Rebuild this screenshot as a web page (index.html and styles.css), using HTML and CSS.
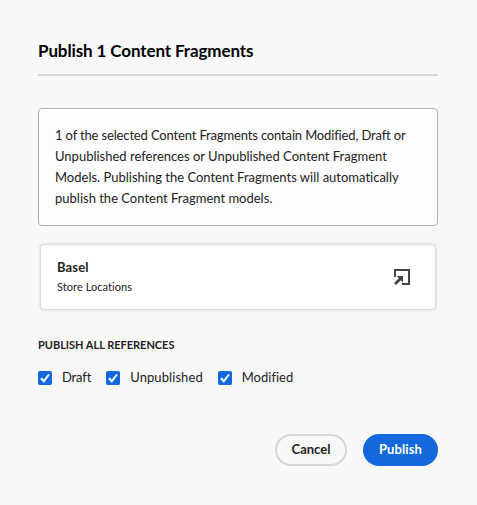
FILE: index.html
```html
<!DOCTYPE html>
<html lang="en">
<head>
<meta charset="utf-8">
<title>Publish</title>
<link rel="stylesheet" href="styles.css">
</head>
<body>
<main class="dialog">
  <h1 class="title">Publish 1 Content Fragments</h1>
  <p class="notice"><span class="tight">1 of the selected Content Fragments contain Modified, Draft or</span><br>Unpublished references or Unpublished Content Fragment<br>Models. Publishing the Content Fragments will automatically<br>publish the Content Fragment models.</p>
  <section class="card">
    <div>
      <h2 class="name">Basel</h2>
      <p class="model">Store Locations</p>
    </div>
    <svg class="open" viewBox="0 0 18 18"><path d="M1 1h16v16H9v-2h6V3H3v6H1z"/><path d="M3.5 8H10v6.500L7.800 12.300 3 17l-2-2 4.800-4.700z"/></svg>
  </section>
  <h3 class="label">PUBLISH ALL REFERENCES</h3>
  <div class="checks">
    <label class="check"><svg class="box" viewBox="0 0 14 14"><rect width="14" height="14" rx="2"/><path d="M3 7.2l2.8 3 5.2-6.7"/></svg><span class="tight">Draft</span></label>
    <label class="check"><svg class="box" viewBox="0 0 14 14"><rect width="14" height="14" rx="2"/><path d="M3 7.2l2.8 3 5.2-6.7"/></svg><span class="wide">Unpublished</span></label>
    <label class="check"><svg class="box" viewBox="0 0 14 14"><rect width="14" height="14" rx="2"/><path d="M3 7.2l2.8 3 5.2-6.7"/></svg><span>Modified</span></label>
  </div>
  <footer class="actions">
    <button class="btn cancel">Cancel</button>
    <button class="btn publish">Publish</button>
  </footer>
</main>
</body>
</html>
```

FILE: styles.css
```css
* { box-sizing: border-box; margin: 0; }
body { background: #f8f8f8; color: #222; font: 13px/21px Lato, "Noto Sans", sans-serif; font-variant-ligatures: none; }
.dialog { width: 477px; height: 505px; padding: 38px 39px 0 38px; }
.title { height: 38px; border-bottom: 2px solid #d5d5d5; font-size: 17px; line-height: 26px; font-weight: 700; color: #000; letter-spacing: -0.11px; }
.notice { margin-top: 32px; height: 118px; padding: 16px; border: 1px solid #b1b1b1; border-radius: 4px; background: #fdfdfd; white-space: nowrap; }
.tight { letter-spacing: -0.15px; }
.wide { letter-spacing: 0.08px; }
.card { margin: 18px 2px 0; height: 66px; padding: 0 24px 0 16px; background: #fff; border: 1px solid #dcdcdc; border-radius: 4px; box-shadow: 0 0 3px rgba(0,0,0,.16); display: flex; align-items: center; justify-content: space-between; }
.name { font-size: 13px; line-height: 20px; margin-top: -1px; letter-spacing: .15px; }
.model { font-size: 11px; line-height: 18px; margin-top: 1px; letter-spacing: .06px; }
.open { width: 18px; height: 18px; fill: #444; }
.label { margin-top: 27px; font-size: 11px; line-height: 16px; letter-spacing: -0.02px; }
.checks { display: flex; gap: 15px; margin-top: 14px; }
.check { display: flex; align-items: center; gap: 10px; }
.box { width: 14px; height: 14px; fill: #1268dc; }
.box path { fill: none; stroke: #fff; stroke-width: 2; }
.actions { display: flex; justify-content: flex-end; gap: 16px; margin-top: 46px; }
.btn { height: 32px; border-radius: 16px; font: 700 13px Lato, sans-serif; padding: 0 0 2px; }
.cancel { width: 72px; border: 2px solid #d5d5d5; background: transparent; color: #222; }
.publish { width: 75px; border: 0; background: #1268dc; color: #fff; letter-spacing: .1px; }
```
